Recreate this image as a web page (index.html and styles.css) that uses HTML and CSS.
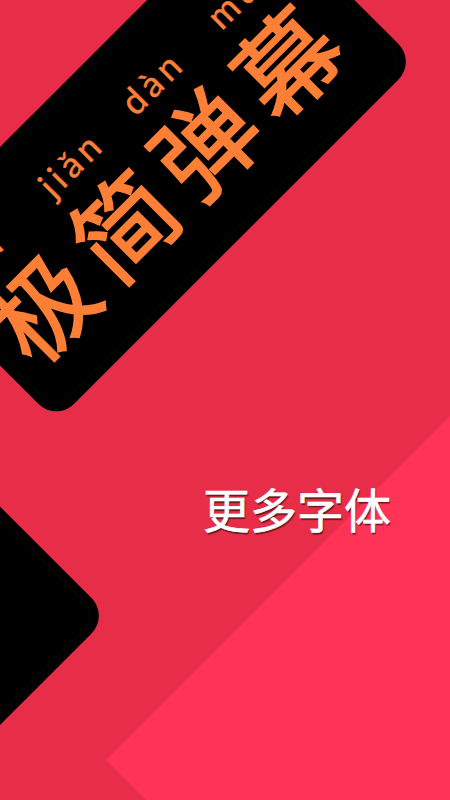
FILE: index.html
```html
<!DOCTYPE html>
<html lang="zh-CN">
  <head>
    <meta charset="UTF-8" />
    <meta name="viewport" content="width=device-width, initial-scale=1.0" />
    <title>更多字体</title>
    <link rel="stylesheet" href="styles.css">
  </head>
  <body>
    <main class="screen">
      <div class="accent"></div>

      <section class="phone phone-top">
        <div class="danmaku">
          <span class="syllable"><span class="pinyin">jí</span><span class="han">极</span></span>
          <span class="syllable"><span class="pinyin">jiǎn</span><span class="han">简</span></span>
          <span class="syllable"><span class="pinyin">dàn</span><span class="han">弹</span></span>
          <span class="syllable"><span class="pinyin">mù</span><span class="han">幕</span></span>
        </div>
      </section>

      <section class="phone phone-bottom"></section>

      <h1 class="caption">更多字体</h1>
    </main>
  </body>
</html>
```

FILE: styles.css
```css
* {
  box-sizing: border-box;
}
body {
  margin: 0;
  font-family: "Noto Sans CJK SC", "Noto Sans", sans-serif;
}
.screen {
  position: relative;
  width: 450px;
  height: 800px;
  overflow: hidden;
  background-color: #e72d47;
  display: flex;
  justify-content: flex-end;
  align-items: flex-start;
  padding: 478px 59px 0 0;
}
.accent {
  position: absolute;
  inset: 0;
  background-color: #ff3355;
  clip-path: polygon(106px 760px, 450px 416px, 450px 800px, 146px 800px);
}
.phone {
  position: absolute;
  width: 509px;
  height: 234px;
  border-radius: 25px;
  background-color: #000;
  transform: rotate(-45deg);
}
.phone::before {
  content: "";
  position: absolute;
  inset: 8px;
  border: 1px solid #0e0507;
  border-radius: 18px;
}
.phone-top {
  left: -101px;
  top: 42px;
}
.phone-bottom {
  left: -408px;
  top: 596px;
}
.danmaku {
  position: relative;
  display: flex;
  gap: 15px;
  padding: 35px 0 0 22px;
}
.syllable {
  display: flex;
  flex-direction: column;
  align-items: center;
  width: 100px;
  color: #ff7f36;
}
.pinyin {
  margin-left: 12px;
  font-family: "Lato", sans-serif;
  font-size: 36px;
  line-height: 53px;
  letter-spacing: 5px;
  white-space: nowrap;
  -webkit-text-stroke: 0.5px #ff7f36;
}
.han {
  font-size: 101px;
  line-height: 100px;
  font-weight: 400;
  -webkit-text-stroke: 2px #ff7f36;
}
.caption {
  position: relative;
  margin: 0;
  font-size: 47px;
  line-height: 60px;
  font-weight: 400;
  color: #fff;
  -webkit-text-stroke: 0.6px #fff;
  text-shadow: 1px 2px 1px rgba(0, 0, 0, 0.55);
}
```
